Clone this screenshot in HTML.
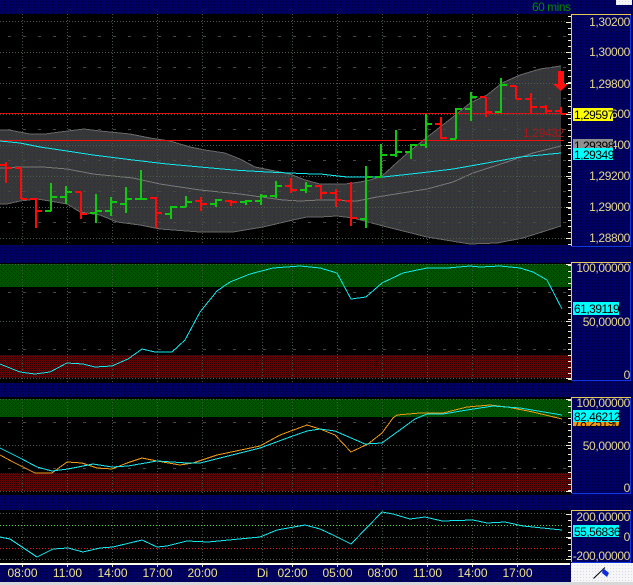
<!DOCTYPE html>
<html><head><meta charset="utf-8">
<style>
html,body{margin:0;padding:0;background:#000;width:633px;height:585px;overflow:hidden}
svg{display:block}
text{font-family:"Liberation Sans",Arial,sans-serif;font-size:12px;letter-spacing:-.35px}
.ax text{fill:#e6d78c;text-anchor:end}
.tm text{fill:#efe38a;font-size:12px;letter-spacing:0;text-anchor:middle}
.tg text{fill:#000;letter-spacing:-.5px}
polyline{shape-rendering:crispEdges}
</style></head>
<body>
<svg width="633" height="585" viewBox="0 0 633 585" xmlns="http://www.w3.org/2000/svg">
<defs>
<pattern id="nv" width="3" height="3" patternUnits="userSpaceOnUse"><rect width="3" height="3" fill="#000062"/><rect x="1" y="1" width="1" height="1" fill="#00002e"/></pattern>
<pattern id="gr" width="4" height="4" patternUnits="userSpaceOnUse"><rect width="4" height="4" fill="#005200"/><rect x="1" y="1" width="1" height="1" fill="#002400"/><rect x="3" y="3" width="1" height="1" fill="#002400"/></pattern>
<pattern id="rd" width="2" height="2" patternUnits="userSpaceOnUse"><rect width="2" height="2" fill="#6c0000"/><rect x="1" width="1" height="1" fill="#2c0000"/><rect y="1" width="1" height="1" fill="#2c0000"/></pattern>
<pattern id="gy" width="4" height="4" patternUnits="userSpaceOnUse"><rect width="4" height="4" fill="#383838"/><rect x="1" y="1" width="1" height="1" fill="#203c26"/><rect x="3" y="2" width="1" height="1" fill="#3c2c38"/><rect x="2" y="0" width="1" height="1" fill="#2a3044"/></pattern>
<pattern id="wh" width="3" height="3" patternUnits="userSpaceOnUse"><rect width="3" height="3" fill="#f6f6f6"/><rect x="1" y="1" width="1" height="1" fill="#d8d8ec"/></pattern>
</defs>

<rect width="633" height="585" fill="url(#nv)"/>
<rect y="14" width="571" height="231" fill="#000"/>
<rect y="263" width="571" height="120" fill="#000"/>
<rect y="397" width="571" height="98" fill="#000"/>
<rect y="510" width="571" height="53" fill="#000"/>

<rect y="264" width="571" height="23" fill="url(#gr)"/>
<rect y="355" width="571" height="23" fill="url(#rd)"/>
<rect y="399" width="571" height="18" fill="url(#gr)"/>
<rect y="473" width="571" height="18" fill="url(#rd)"/>

<!-- Bollinger band -->
<polygon fill="url(#gy)" shape-rendering="crispEdges" points="0,130 9,130 30,134 45,134 60,132 84,129 100,131 130,134 150,138 170,141 190,147 205,150 225,153 240,159 255,167 275,171 290,174 305,180 320,184 345,184 360,182 370,180 382,176 403,157 426,138 453,117 470,103 487,95 502,83 520,75 540,69 561,66 561,226 523,238 497,243 470,244 427,237 383,226 353,218 337,216 320,217 307,217 293,220 263,227 233,232 200,232 160,229 140,225 117,222 100,215 80,212 67,204 50,201 37,199 20,201 7,204 0,204"/>
<g fill="none" stroke="#686868" stroke-width="1">
<polyline points="0,130 9,130 30,134 45,134 60,132 84,129 100,131 130,134 150,138 170,141 190,147 205,150 225,153 240,159 255,167 275,171 290,174 305,180 320,184 345,184 360,182 370,180 382,176 403,157 426,138 453,117 470,103 487,95 502,83 520,75 540,69 561,66"/>
<polyline points="0,204 7,204 20,201 37,199 50,201 67,204 80,212 100,215 117,222 140,225 160,229 200,232 233,232 263,227 293,220 307,217 320,217 337,216 353,218 383,226 427,237 470,244 497,243 523,238 561,226"/>
<polyline stroke="#787878" points="0,168 20,167 43,167 67,169 93,174 133,178 160,184 200,190 240,194 283,200 300,201 320,200 333,200 357,201 377,197 427,189 453,182 473,173 507,162 533,153 561,146"/>
</g>

<!-- grid verticals -->
<g stroke="#465646" stroke-width="1" stroke-dasharray="1 2" fill="none" shape-rendering="crispEdges">
<path d="M22.5 14V245M67.5 14V245M112.5 14V245M157.5 14V245M202.5 14V245M262.5 14V245M292.5 14V245M337.5 14V245M382.5 14V245M427.5 14V245M472.5 14V245M517.5 14V245"/>
<path d="M22.5 264V383M67.5 264V383M112.5 264V383M157.5 264V383M202.5 264V383M262.5 264V383M292.5 264V383M337.5 264V383M382.5 264V383M427.5 264V383M472.5 264V383M517.5 264V383"/>
<path d="M22.5 399V495M67.5 399V495M112.5 399V495M157.5 399V495M202.5 399V495M262.5 399V495M292.5 399V495M337.5 399V495M382.5 399V495M427.5 399V495M472.5 399V495M517.5 399V495"/>
<path d="M22.5 510V563M67.5 510V563M112.5 510V563M157.5 510V563M202.5 510V563M262.5 510V563M292.5 510V563M337.5 510V563M382.5 510V563M427.5 510V563M472.5 510V563M517.5 510V563"/>
</g>
<!-- grid horizontals major -->
<g stroke="#4c5c4c" stroke-width="1" stroke-dasharray="1 2" fill="none" shape-rendering="crispEdges">
<path d="M0 21.5H567M0 52.5H567M0 83.5H567M0 114.5H567M0 145.5H567M0 176.5H567M0 207.5H567M0 238.5H567"/>
<path d="M0 264.5H567M0 321.5H567M0 378.5H567"/>
<path d="M0 399.5H567M0 445.5H567M0 491.5H567"/>
<path d="M0 513.5H567M0 537.5H567M0 559.5H567"/>
</g>
<!-- grid horizontals minor -->
<g stroke="#484848" stroke-width="1" stroke-dasharray="3 12" stroke-dashoffset="-8" fill="none" shape-rendering="crispEdges">
<path d="M0 36.5H567M0 67.5H567M0 98.5H567M0 129.5H567M0 160.5H567M0 191.5H567M0 222.5H567"/>
<path d="M0 292.5H567M0 349.5H567"/>
<path d="M0 422.5H567M0 468.5H567"/>
</g>

<!-- red horizontal lines -->
<rect x="0" y="113" width="567" height="1" fill="#e01010"/>
<rect x="0" y="140" width="564" height="1" fill="#f01010"/>

<!-- cyan MA -->
<polyline fill="none" stroke="#10e8f0" stroke-width="1" points="0,141 20,143 40,147 67,151 93,155 133,160 167,164 200,167 233,170 267,172 313,174 320,174 347,177 383,177 420,173 453,169 487,163 520,157 561,153"/>

<!-- bars -->
<path fill="none" stroke="#ff0a0a" stroke-width="2" shape-rendering="crispEdges" d="
M6 162V183M0 165H6M6 168H12
M21 168V199M15 168H21M21 199H27
M36 198V228M30 199H36M36 211H42
M81 192V219M75 192H81M81 214H87
M156 197V228M150 198H156M156 213H162
M201 197V211M195 201H201M201 204H207
M231 200V206M225 201H231M231 202H237
M291 178V193M285 186H291M291 190H297
M321 185V199M315 186H321M321 193H327
M336 189V207M330 193H336M336 200H342
M351 182V226M345 201H351M351 218H357
M441 117V139M435 124H441M441 138H447
M486 97V117M480 97H486M486 112H492
M516 86V99M510 86H516M516 99H522
M531 93V113M525 99H531M531 107H537
M546 105V113M540 107H546M546 111H552
M561 107V114M555 111H561M561 114H567"/>
<path fill="none" stroke="#10c810" stroke-width="2" shape-rendering="crispEdges" d="
M51 183V211M45 211H51M51 197H57
M66 186V204M60 197H66M66 192H72
M96 194V223M90 213H96M96 211H102
M111 197V216M105 211H111M111 202H117
M126 187V213M120 204H126M126 199H132
M141 170V199M135 199H141M141 199H147
M171 206V219M165 214H171M171 207H177
M186 196V207M180 207H186M186 202H192
M216 199V207M210 204H216M216 200H222
M246 200V205M240 202H246M246 201H252
M261 194V205M255 201H261M261 196H267
M276 181V198M270 196H276M276 186H282
M306 182V193M300 190H306M306 186H312
M366 166V228M360 219H366M366 177H372
M381 144V177M375 177H381M381 155H387
M396 130V157M390 155H396M396 152H402
M411 144V159M405 152H411M411 145H417
M426 114V148M420 145H426M426 124H432
M456 108V139M450 139H456M456 109H462
M471 92V121M465 109H471M471 97H477
M501 78V113M495 112H501M501 85H507"/>

<!-- arrow -->
<polygon fill="#ff1010" points="558,71 564,71 564,84 568,84 561,91 553,84 558,84"/>
<text x="523" y="137" fill="#a81818">1,29432</text>

<!-- panel 2 line -->
<polyline fill="none" stroke="#10e8f0" stroke-width="1" points="0,364 10,368 20,372 35,374 50,372 67,363 83,364 95,367 112,366 128,359 142,349 155,352 172,352 185,340 200,312 217,291 230,282 250,274 273,268 300,266 320,268 337,273 351,299 366,297 382,283 403,273 427,268 448,268 470,266 480,267 500,266 520,268 533,272 547,280 562,309"/>

<!-- panel 3 lines -->
<polyline fill="none" stroke="#f09a10" stroke-width="1" points="0,455 13,462 35,473 52,473 67,462 82,463 97,468 112,469 127,463 142,458 157,461 180,465 193,463 217,455 260,446 280,435 307,425 320,429 335,435 351,452 368,444 382,433 393,418 397,415 420,413 443,413 467,407 490,405 507,407 533,412 562,419"/>
<polyline fill="none" stroke="#10e8f0" stroke-width="1" points="0,448 20,458 37,467 52,471 68,469 93,464 112,467 128,466 157,461 187,463 200,463 260,448 290,437 307,431 320,429 335,431 365,444 382,443 415,419 427,414 443,414 467,410 493,406 520,408 562,415"/>

<!-- panel 4 -->
<path d="M0 525.5H562" stroke="#50d040" stroke-width="1" stroke-dasharray="1 2" fill="none" shape-rendering="crispEdges"/>
<path d="M0 548.5H562" stroke="#e01818" stroke-width="1" stroke-dasharray="1 2" fill="none" shape-rendering="crispEdges"/>
<polyline fill="none" stroke="#10e8f0" stroke-width="1" points="0,537 10,539 22,547 37,557 53,549 68,548 83,552 100,548 113,547 142,540 157,547 167,546 187,541 208,542 260,537 277,530 305,525 320,529 333,535 351,544 382,512 393,514 410,519 425,517 442,521 473,520 487,523 505,522 523,526 562,530"/>

<!-- axis ticks -->
<g fill="none" stroke="#f4f0d8" stroke-width="3" shape-rendering="crispEdges" stroke-dasharray="1 5">
<path d="M569.5 16V245"/>
<path d="M569.5 265V380"/>
<path d="M569.5 400V493"/>
<path d="M569.5 514V562"/>
</g>
<path d="M566 22.5h5M566 52.5h5M566 83.5h5M566 114.5h5M566 145.5h5M566 176.5h5M566 207.5h5M566 238.5h5M566 264.5h5M566 321.5h5M566 378.5h5M566 399.5h5M566 445.5h5M566 491.5h5M566 514.5h5M566 537.5h5M566 559.5h5" stroke="#f4f0d8" stroke-width="1" shape-rendering="crispEdges"/>

<!-- axis boxes -->
<g fill="none" stroke-width="1" shape-rendering="crispEdges">
<path stroke="#1038e0" d="M630.5 14.5V246.5H571.5M630.5 262.5V380.5H571.5M630.5 397.5V493.5H571.5M630.5 510.5V562.5H571.5"/>
<path stroke="#e8c858" d="M571.5 246V14.5H631M571.5 380V262.5H631M571.5 493V397.5H631M571.5 562V510.5H631"/>
</g>

<!-- axis labels -->
<g class="ax">
<text x="630" y="26">1,30200</text>
<text x="630" y="56">1,30000</text>
<text x="630" y="88">1,29800</text>
<text x="630" y="118">1,29600</text>
<text x="630" y="149">1,29400</text>
<text x="630" y="180">1,29200</text>
<text x="630" y="211">1,29000</text>
<text x="630" y="242">1,28800</text>
<text x="630" y="272">100,00000</text>
<text x="630" y="326">50,00000</text>
<text x="630" y="379">0</text>
<text x="630" y="407">100,00000</text>
<text x="630" y="450">50,00000</text>
<text x="630" y="492">0</text>
<text x="630" y="521">200,00000</text>
<text x="630" y="541">0</text>
<text x="630" y="560">-200,00000</text>
</g>

<!-- tags -->
<g class="tg">
<rect x="573" y="108" width="40" height="13" fill="#ffff00"/><text x="574" y="119">1,29597</text>
<rect x="573" y="139" width="40" height="10" fill="#909090"/><text x="574" y="150">1,29398</text>
<rect x="573" y="148" width="40" height="12" fill="#00ffff"/><text x="574" y="159">1,29349</text>
<rect x="573" y="302" width="46" height="13" fill="#00ffff"/><text x="574" y="313">61,39119</text>
<rect x="573" y="418" width="46" height="8" fill="#f09a10"/><text x="574" y="427">78,25190</text>
<rect x="573" y="410" width="46" height="12" fill="#00ffff"/><text x="574" y="421">82,46212</text>
<rect x="573" y="525" width="46" height="12" fill="#00ffff"/><text x="574" y="536">55,56836</text>
</g>

<!-- 60 mins -->
<text x="532" y="11" fill="#008a00" style="letter-spacing:-.5px">60 mins</text>
<rect x="616" y="0" width="16" height="5" fill="url(#wh)"/>

<!-- time axis -->
<rect x="0" y="563" width="570" height="1" fill="#fff8e0"/>
<rect x="0" y="564" width="570" height="1" fill="#fff"/>
<path d="M22.5 565v2M67.5 565v2M112.5 565v2M157.5 565v2M202.5 565v2M292.5 565v2M337.5 565v2M382.5 565v2M427.5 565v2M472.5 565v2M517.5 565v2" stroke="#efe38a" stroke-width="1" shape-rendering="crispEdges"/>
<g class="tm">
<text x="22.5" y="577">08:00</text>
<text x="67.5" y="577">11:00</text>
<text x="112.5" y="577">14:00</text>
<text x="157.5" y="577">17:00</text>
<text x="202.5" y="577">20:00</text>
<text x="262.5" y="577">Di</text>
<text x="292.5" y="577">02:00</text>
<text x="337.5" y="577">05:00</text>
<text x="382.5" y="577">08:00</text>
<text x="427.5" y="577">11:00</text>
<text x="472.5" y="577">14:00</text>
<text x="517.5" y="577">17:00</text>
</g>

<!-- bottom right flag box -->
<rect x="571" y="563" width="62" height="20" fill="url(#wh)"/>
<path d="M593.5 578.5L605 567.5" stroke="#000" stroke-width="1" fill="none"/>
<polygon fill="#1030e0" points="603,568 609,573 607,577 602,573"/>
<rect x="0" y="582" width="633" height="3" fill="#d8d8d8"/>
</svg>
</body></html>
